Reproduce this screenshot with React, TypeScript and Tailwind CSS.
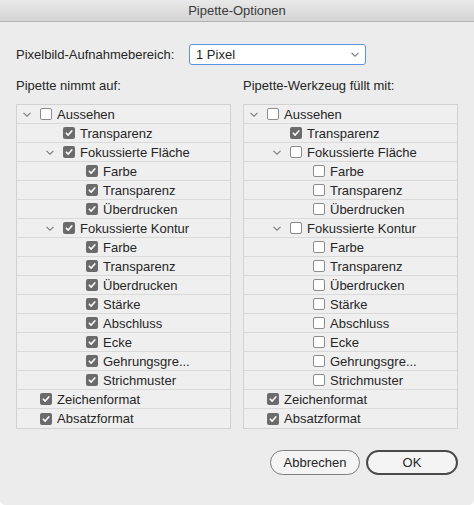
import React from "react";

type Row = { label: string; level: 0 | 1 | 2; chevron?: boolean; left: boolean; right: boolean };

const ROWS: Row[] = [
  { label: "Aussehen", level: 0, chevron: true, left: false, right: false },
  { label: "Transparenz", level: 1, left: true, right: true },
  { label: "Fokussierte Fläche", level: 1, chevron: true, left: true, right: false },
  { label: "Farbe", level: 2, left: true, right: false },
  { label: "Transparenz", level: 2, left: true, right: false },
  { label: "Überdrucken", level: 2, left: true, right: false },
  { label: "Fokussierte Kontur", level: 1, chevron: true, left: true, right: false },
  { label: "Farbe", level: 2, left: true, right: false },
  { label: "Transparenz", level: 2, left: true, right: false },
  { label: "Überdrucken", level: 2, left: true, right: false },
  { label: "Stärke", level: 2, left: true, right: false },
  { label: "Abschluss", level: 2, left: true, right: false },
  { label: "Ecke", level: 2, left: true, right: false },
  { label: "Gehrungsgre...", level: 2, left: true, right: false },
  { label: "Strichmuster", level: 2, left: true, right: false },
  { label: "Zeichenformat", level: 0, left: true, right: true },
  { label: "Absatzformat", level: 0, left: true, right: true },
];

const INDENT = ["pl-[6px]", "pl-[29px]", "pl-[52px]"];

function Chevron() {
  return (
    <svg width="8" height="5" viewBox="0 0 8 5" className="block">
      <path d="M0.5 0.8L4 4.2L7.5 0.8" fill="none" stroke="#7c7c7c" strokeWidth="1.1" />
    </svg>
  );
}

function Check({ on }: { on: boolean }) {
  if (!on)
    return <span className="block w-[12px] h-[12px] rounded-[2px] border border-[#8c8c8c] bg-white shrink-0" />;
  return (
    <span className="flex items-center justify-center w-[12px] h-[12px] rounded-[2px] bg-[#6b6b6b] shrink-0">
      <svg width="10" height="10" viewBox="0 0 10 10">
        <path d="M2.3 5.2L4.2 7.1L7.8 2.9" fill="none" stroke="#fff" strokeWidth="1.6" strokeLinecap="round" strokeLinejoin="round" />
      </svg>
    </span>
  );
}

function Tree({ side }: { side: "left" | "right" }) {
  return (
    <div className="border border-[#d2d2d2] bg-[#efefef]">
      {ROWS.map((r, i) => (
        <div
          key={i}
          className={`h-[19px] flex items-center ${INDENT[r.level]} ${i < ROWS.length - 1 ? "border-b border-[#dadada]" : ""}`}
        >
          <span className="w-[17px] shrink-0 flex items-center">{r.chevron && <Chevron />}</span>
          <Check on={r[side]} />
          <span className="ml-[5px] text-[13px] leading-none text-[#262626] whitespace-nowrap">{r.label}</span>
        </div>
      ))}
    </div>
  );
}

export default function App() {
  return (
    <div className="w-[474px] h-[505px] bg-white" style={{ fontFamily: '"Liberation Sans", Arial, sans-serif' }}>
      <div className="w-full h-full bg-[#ececec] rounded-b-[5px] overflow-hidden flex flex-col">
        {/* title bar */}
        <div className="h-[22px] shrink-0 flex items-center justify-center bg-gradient-to-b from-[#e9e9e9] to-[#d4d4d4] border-b border-[#b3b3b3]">
          <span className="text-[13px] text-[#3a3a3a]">Pipette-Optionen</span>
        </div>

        <div className="px-[16px]">
          <div className="mt-[22px] flex items-center h-[21px]">
            <span className="text-[13px] text-[#262626] w-[173px]">Pixelbild-Aufnahmebereich:</span>
            <div className="w-[177px] h-[21px] bg-white border border-[#5b93dc] rounded-[3px] flex items-center justify-between pl-[6px] pr-[6px]">
              <span className="text-[13px] text-[#262626]">1 Pixel</span>
              <Chevron />
            </div>
          </div>

          <div className="mt-[13px] grid grid-cols-2 gap-x-[12px]">
            <div className="text-[13px] text-[#262626] h-[16px] leading-[16px]">Pipette nimmt auf:</div>
            <div className="text-[13px] text-[#262626] h-[16px] leading-[16px]">Pipette-Werkzeug füllt mit:</div>
            <div className="mt-[10px]">
              <Tree side="left" />
            </div>
            <div className="mt-[10px]">
              <Tree side="right" />
            </div>
          </div>

          <div className="mt-[21px] flex justify-end gap-[6px]">
            <button className="w-[90px] h-[25px] rounded-full border border-[#7e7e7e] bg-[#f4f4f4] text-[13px] text-[#262626]">
              Abbrechen
            </button>
            <button className="w-[92px] h-[25px] rounded-full border-2 border-[#4a4a4a] bg-[#f4f4f4] text-[13px] text-[#262626]">
              OK
            </button>
          </div>
        </div>
      </div>
    </div>
  );
}
